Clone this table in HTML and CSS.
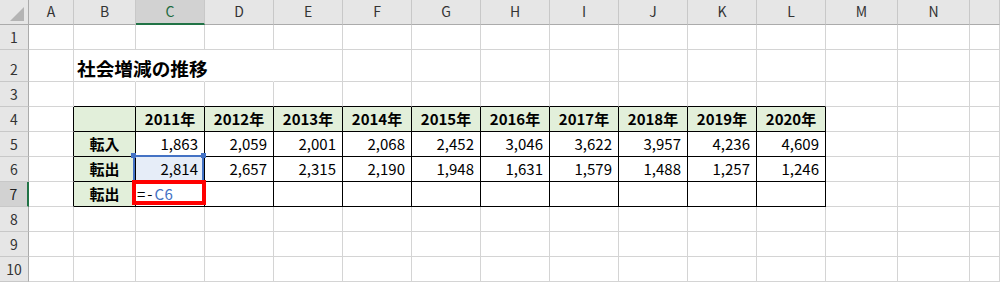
FILE: index.html
```html
<!DOCTYPE html>
<html lang="ja">
<head>
<meta charset="utf-8">
<title>社会増減の推移</title>
<link rel="stylesheet" href="styles.css">
</head>
<body>
<div class="sheet">
  <!-- header row -->
  <div class="corner"><svg class="tri" width="28" height="24" viewBox="0 0 28 24"><polygon points="24,7 24,21 10,21" fill="#b4b4b4"/></svg></div>
  <div class="ch">A</div><div class="ch">B</div><div class="ch sel">C</div><div class="ch">D</div><div class="ch">E</div><div class="ch">F</div><div class="ch">G</div><div class="ch">H</div><div class="ch">I</div><div class="ch">J</div><div class="ch">K</div><div class="ch">L</div><div class="ch">M</div><div class="ch">N</div><div class="ch"></div>

  <!-- row 1 -->
  <div class="rh">1</div>
  <div class="c"></div><div class="c"></div><div class="c"></div><div class="c"></div><div class="c"></div><div class="c"></div><div class="c"></div><div class="c"></div><div class="c"></div><div class="c"></div><div class="c"></div><div class="c"></div><div class="c"></div><div class="c"></div><div class="c"></div>

  <!-- row 2 -->
  <div class="rh">2</div>
  <div class="c"></div><div class="c over title">社会増減の推移</div><div class="c over"></div><div class="c over"></div><div class="c"></div><div class="c"></div><div class="c"></div><div class="c"></div><div class="c"></div><div class="c"></div><div class="c"></div><div class="c"></div><div class="c"></div><div class="c"></div><div class="c"></div>

  <!-- row 3 -->
  <div class="rh">3</div>
  <div class="c"></div><div class="c tt"></div><div class="c tt"></div><div class="c tt"></div><div class="c tt"></div><div class="c tt"></div><div class="c tt"></div><div class="c tt"></div><div class="c tt"></div><div class="c tt"></div><div class="c tt"></div><div class="c tt"></div><div class="c"></div><div class="c"></div><div class="c"></div>

  <!-- row 4 -->
  <div class="rh">4</div>
  <div class="c tl"></div><div class="c t g"></div><div class="c t g h">2011年</div><div class="c t g h">2012年</div><div class="c t g h">2013年</div><div class="c t g h">2014年</div><div class="c t g h">2015年</div><div class="c t g h">2016年</div><div class="c t g h">2017年</div><div class="c t g h">2018年</div><div class="c t g h">2019年</div><div class="c t g h">2020年</div><div class="c"></div><div class="c"></div><div class="c"></div>

  <!-- row 5 -->
  <div class="rh">5</div>
  <div class="c tl"></div><div class="c t g h">転入</div><div class="c t n">1,863</div><div class="c t n">2,059</div><div class="c t n">2,001</div><div class="c t n">2,068</div><div class="c t n">2,452</div><div class="c t n">3,046</div><div class="c t n">3,622</div><div class="c t n">3,957</div><div class="c t n">4,236</div><div class="c t n">4,609</div><div class="c"></div><div class="c"></div><div class="c"></div>

  <!-- row 6 -->
  <div class="rh">6</div>
  <div class="c tl"></div><div class="c t g h">転出</div><div class="c t n ref">2,814<span class="refbox"></span><span class="hdl hdl-l"></span><span class="hdl hdl-r"></span></div><div class="c t n">2,657</div><div class="c t n">2,315</div><div class="c t n">2,190</div><div class="c t n">1,948</div><div class="c t n">1,631</div><div class="c t n">1,579</div><div class="c t n">1,488</div><div class="c t n">1,257</div><div class="c t n">1,246</div><div class="c"></div><div class="c"></div><div class="c"></div>

  <!-- row 7 -->
  <div class="rh rsel">7</div>
  <div class="c tl"></div><div class="c t g h">転出</div><div class="c t edit"><span class="op">=-</span><span class="refc">C6</span><span class="redbox"></span></div><div class="c t"></div><div class="c t"></div><div class="c t"></div><div class="c t"></div><div class="c t"></div><div class="c t"></div><div class="c t"></div><div class="c t"></div><div class="c t"></div><div class="c"></div><div class="c"></div><div class="c"></div>

  <!-- row 8 -->
  <div class="rh">8</div>
  <div class="c"></div><div class="c"></div><div class="c"></div><div class="c"></div><div class="c"></div><div class="c"></div><div class="c"></div><div class="c"></div><div class="c"></div><div class="c"></div><div class="c"></div><div class="c"></div><div class="c"></div><div class="c"></div><div class="c"></div>

  <!-- row 9 -->
  <div class="rh">9</div>
  <div class="c"></div><div class="c"></div><div class="c"></div><div class="c"></div><div class="c"></div><div class="c"></div><div class="c"></div><div class="c"></div><div class="c"></div><div class="c"></div><div class="c"></div><div class="c"></div><div class="c"></div><div class="c"></div><div class="c"></div>

  <!-- row 10 -->
  <div class="rh">10</div>
  <div class="c"></div><div class="c"></div><div class="c"></div><div class="c"></div><div class="c"></div><div class="c"></div><div class="c"></div><div class="c"></div><div class="c"></div><div class="c"></div><div class="c"></div><div class="c"></div><div class="c"></div><div class="c"></div><div class="c"></div>
</div>
</body>
</html>
```
FILE: styles.css
```css
html, body {
  margin: 0;
  padding: 0;
  background: #ffffff;
}

body {
  font-family: "Noto Sans CJK JP", "Noto Sans", sans-serif;
  color: #000;
  width: 1000px;
  height: 282px;
  overflow: hidden;
}

.sheet {
  display: grid;
  grid-template-columns: 29px 45px 62px repeat(10, 69px) 72px 72px 1fr;
  grid-template-rows: 25px 25px 32px repeat(8, 25px);
  width: 1000px;
  height: 282px;
}

.sheet > div {
  box-sizing: border-box;
  min-width: 0;
}

/* header row */
.corner {
  background: #e6e6e6;
  border-right: 1px solid #ababab;
  border-bottom: 1px solid #ababab;
  position: relative;
}

.tri {
  display: block;
}

.ch {
  background: #e6e6e6;
  border-right: 1px solid #c8c8c8;
  border-bottom: 1px solid #ababab;
  text-align: center;
  font-size: 14px;
  line-height: 23px;
  color: #333;
}

.ch.sel {
  background: #d2d2d2;
  border-bottom: 2px solid #217346;
  color: #1d6b40;
}

/* row headers */
.rh {
  background: #e6e6e6;
  border-right: 1px solid #ababab;
  border-bottom: 1px solid #c8c8c8;
  font-size: 14px;
  line-height: 24px;
  color: #333;
  display: flex;
  align-items: flex-end;
  justify-content: center;
}

.rh.rsel {
  background: #d2d2d2;
  border-right: 2px solid #217346;
  color: #222;
}

/* ordinary cells */
.c {
  border-right: 1px solid #d4d4d4;
  border-bottom: 1px solid #d4d4d4;
  font-size: 15px;
  line-height: 23px;
  white-space: nowrap;
}

.c.over {
  border-right-color: transparent;
}

.title {
  font-size: 18.67px;
  font-weight: bold;
  line-height: 24px;
  padding: 6px 0 0 3px;
  overflow: visible;
}

/* table borders */
.t {
  border-right-color: #000;
  border-bottom-color: #000;
}

.tl {
  border-right-color: #000;
}

.tt {
  border-bottom-color: #000;
}

.g {
  background: #e2efda;
}

.h {
  font-weight: bold;
  text-align: center;
}

.n {
  text-align: right;
  padding-right: 6px;
}

/* referenced cell C6 */
.ref {
  position: relative;
  background: #e6edf8;
}

.refbox {
  position: absolute;
  left: -3px;
  top: -2px;
  width: 71px;
  height: 26px;
  border: 2px solid #4472c4;
  border-bottom: none;
  box-sizing: border-box;
}

.hdl {
  position: absolute;
  top: -4px;
  width: 5px;
  height: 5px;
  background: #4472c4;
}

.hdl-l {
  left: -5px;
}

.hdl-r {
  left: 65px;
}

/* editing cell C7 */
.edit {
  position: relative;
  padding-left: 1px;
}

.op {
  letter-spacing: 2px;
}

.refc {
  color: #4472c4;
  letter-spacing: 0.5px;
}

.redbox {
  position: absolute;
  left: -4px;
  top: -2px;
  width: 74px;
  height: 25px;
  border: 4px solid #ff0000;
  box-sizing: border-box;
}
```
